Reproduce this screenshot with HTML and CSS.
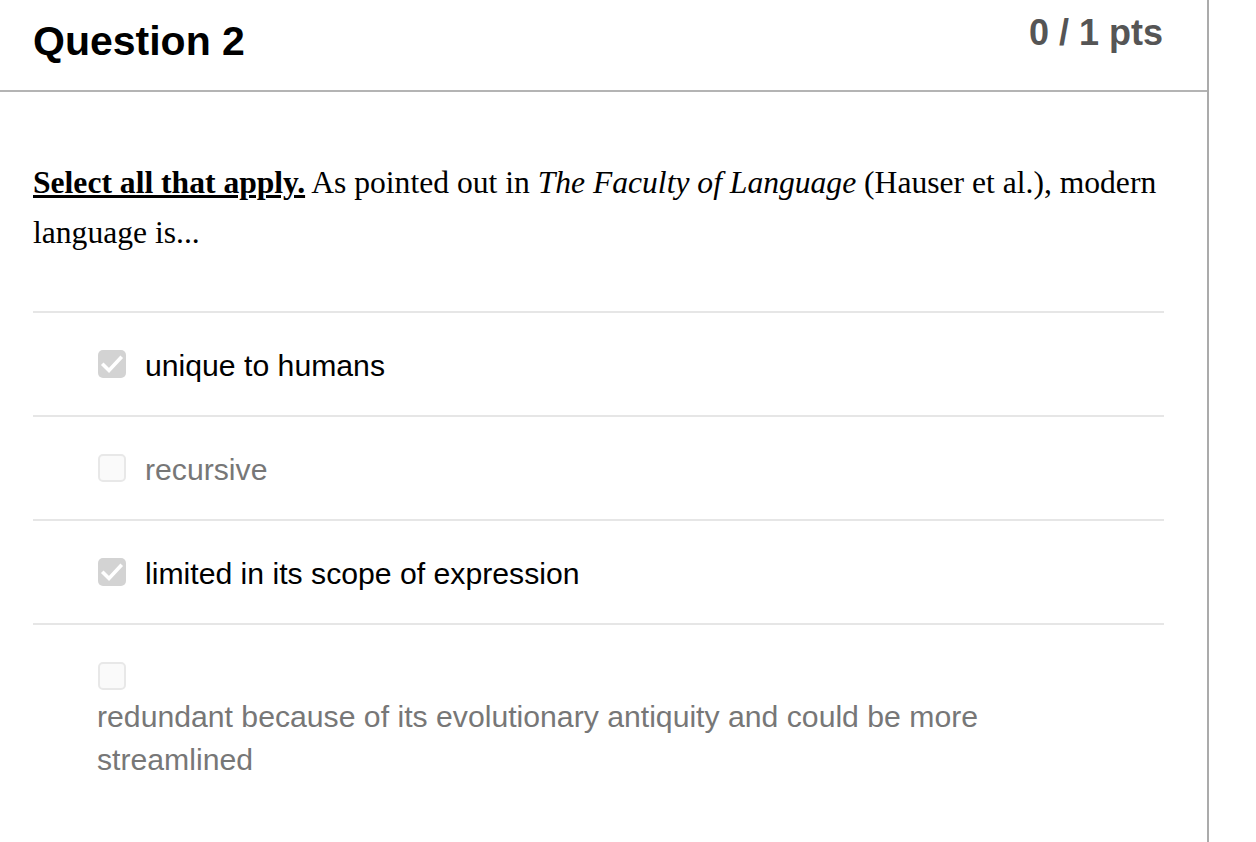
FILE: index.html
```html
<!DOCTYPE html>
<html>
<head>
<meta charset="utf-8">
<link rel="stylesheet" href="styles.css">
</head>
<body>
<div class="question">
  <div class="header">
    <h2 class="title">Question 2</h2>
    <div class="pts">0 / 1 pts</div>
  </div>
  <div class="prompt">
    <p><strong class="u">Select all that apply.</strong> As pointed out in <em>The Faculty of Language</em> (Hauser et al.), modern language is...</p>
  </div>
  <div class="answers">
    <div class="answer">
      <span class="box checked"><svg viewBox="0 0 28 28" width="28" height="28"><path d="M5.5 15 L11 20.5 L22.5 8" fill="none" stroke="#fff" stroke-width="3.6" stroke-linecap="square" stroke-linejoin="miter"/></svg></span>
      <span class="label sel">unique to humans</span>
    </div>
    <div class="answer">
      <span class="box"></span>
      <span class="label">recursive</span>
    </div>
    <div class="answer">
      <span class="box checked"><svg viewBox="0 0 28 28" width="28" height="28"><path d="M5.5 15 L11 20.5 L22.5 8" fill="none" stroke="#fff" stroke-width="3.6" stroke-linecap="square" stroke-linejoin="miter"/></svg></span>
      <span class="label sel">limited in its scope of expression</span>
    </div>
    <div class="answer wrap">
      <span class="box"></span>
      <div class="label long">redundant because of its evolutionary antiquity and could be more streamlined</div>
    </div>
  </div>
</div>
</body>
</html>
```
FILE: styles.css
```css
html, body {
  margin: 0;
  padding: 0;
  background: #fff;
}
.question {
  width: 1207px;
  min-height: 842px;
  border-right: 2px solid #ababab;
  box-sizing: content-box;
}
.header {
  height: 90px;
  border-bottom: 2px solid #b4b4b4;
  display: flex;
  justify-content: space-between;
  align-items: flex-start;
  padding: 0 44px 0 33px;
  font-family: "Liberation Sans", Arial, sans-serif;
}
.title {
  margin: 21px 0 0 0;
  font-size: 41px;
  line-height: 41px;
  font-weight: bold;
  color: #000;
}
.pts {
  margin-top: 15px;
  font-size: 36px;
  line-height: 36px;
  font-weight: bold;
  color: #555;
}
.prompt {
  padding: 0 33px;
  margin-top: 66px;
  font-family: "Liberation Serif", "Times New Roman", serif;
  font-size: 31.6px;
  line-height: 50px;
  color: #000;
}
.prompt p {
  margin: 0;
}
.u {
  text-decoration: underline;
}
.answers {
  margin: 53px 43px 0 33px;
  font-family: "Liberation Sans", Arial, sans-serif;
}
.answer {
  border-top: 2px solid #e6e6e6;
  height: 102px;
  display: flex;
  align-items: center;
  padding-left: 65px;
}
.box {
  width: 28px;
  height: 28px;
  box-sizing: border-box;
  border-radius: 5px;
  border: 2px solid #e8e8e8;
  background: #fafafa;
  flex: none;
  display: block;
}
.box.checked {
  background: #d3d3d3;
  border: none;
}
.box svg {
  display: block;
}
.label {
  margin-left: 19px;
  font-size: 30.2px;
  line-height: 40px;
  color: #777;
  position: relative;
  top: 2px;
}
.label.sel {
  color: #000;
}
.answer.wrap {
  display: block;
  height: auto;
  padding-top: 37px;
  padding-left: 64px;
}
.answer.wrap .box {
  margin-left: 1px;
}
.label.long {
  margin: 6px 0 0 0;
  max-width: 960px;
  line-height: 43px;
  top: -1px;
}
```
